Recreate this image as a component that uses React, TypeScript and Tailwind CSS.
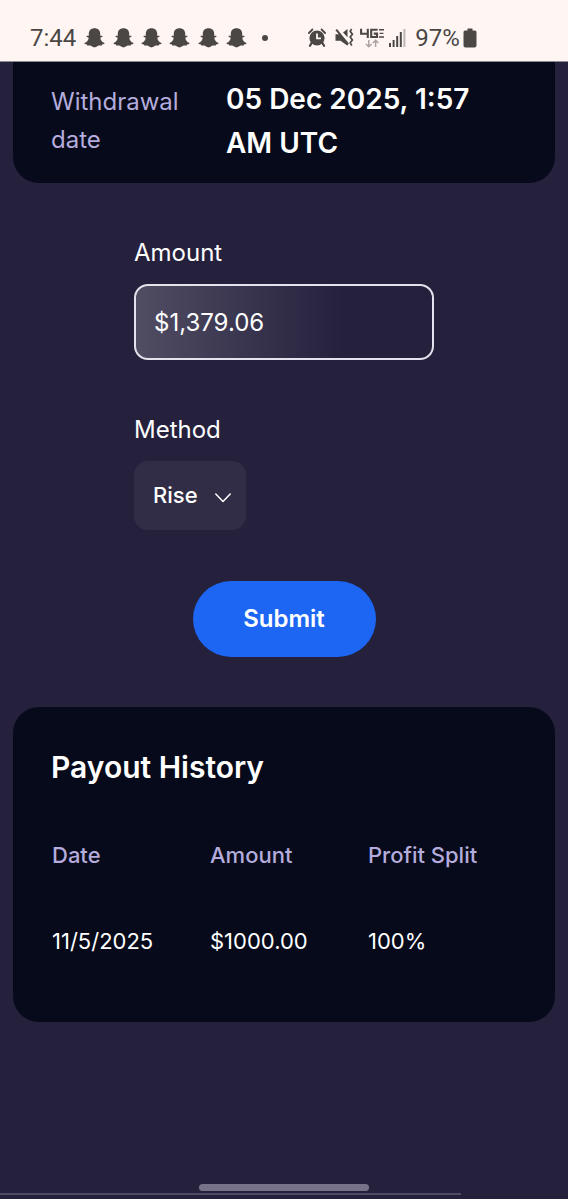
import React from 'react';

function Ghost() {
  return (
    <svg viewBox="0 0 21 20" className="h-5 w-[21px]" fill="#4b4745" aria-hidden="true">
      <path d="M10.5 0.2C7 0.2 4.8 2.4 4.8 5.6V7.8C4 8 3.2 7.7 2.6 7.9C2.2 8.5 3 9 4.7 9.8C4.5 12.3 2.8 14.2 0.5 15C0.1 15.5 0.7 16.3 3 16.6L3.5 17.7C6 17.3 7 17.7 8 18.6C9.5 19.7 11.5 19.7 13 18.6C14 17.7 15 17.3 17.5 17.7L18 16.6C20.3 16.3 20.9 15.5 20.5 15C18.2 14.2 16.5 12.3 16.3 9.8C18 9 18.8 8.5 18.4 7.9C17.8 7.7 17 8 16.2 7.8V5.6C16.2 2.4 14 0.2 10.5 0.2Z" />
    </svg>
  );
}

function Alarm() {
  return (
    <svg viewBox="0 0 18 19" className="h-[19px] w-[18px]" fill="none" aria-hidden="true">
      <path d="M3.5 15L2 17.8M14.5 15L16 17.8" stroke="#4b4745" strokeWidth="2.2" strokeLinecap="round" />
      <path d="M0.9 5L4.4 1.5M17.1 5L13.6 1.5" stroke="#4b4745" strokeWidth="1.8" strokeLinecap="round" />
      <circle cx="9" cy="10" r="7.6" fill="#4b4745" />
      <path d="M9 5.4V10.4H13" stroke="#fff6f4" strokeWidth="1.8" />
    </svg>
  );
}

function Muted() {
  return (
    <svg viewBox="0 0 19 19" className="h-[19px] w-[19px]" fill="none" aria-hidden="true">
      <path d="M0.5 6.2H4.5L7 8.5L12.5 14V17.8L5.5 12.8H0.5Z" fill="#4b4745" />
      <path d="M8 4.5L12.5 1V9.2Z" fill="#4b4745" />
      <path d="M1.2 1.6L13.2 16.4" stroke="#4b4745" strokeWidth="2" />
      <path d="M16.6 1L15.2 3.4L17.4 6.2L15.2 9L17.4 12L15.2 14.8L16.8 17.6" stroke="#4b4745" strokeWidth="1.7" />
    </svg>
  );
}

function Network() {
  return (
    <svg viewBox="0 0 24 20" className="h-5 w-6" fill="none" aria-hidden="true">
      <path d="M1.1 0.8V5.8H8.8M7.8 0.8V10M17.6 1.8H11.2V9H17V5.6H13.8" stroke="#4b4745" strokeWidth="2.1" />
      <path d="M19 1.8H24M19.6 5.4H23.4M19 9H24" stroke="#4b4745" strokeWidth="1.4" />
      <path d="M8.8 12V18.5M6 16L8.8 18.8L11.6 16M15.6 19V12.5M12.8 15L15.6 12.2L18.4 15" stroke="#aaa5a3" strokeWidth="1.5" />
    </svg>
  );
}

function Signal() {
  return (
    <svg viewBox="0 0 17 18" className="h-[18px] w-[17px]" fill="#4b4745" aria-hidden="true">
      <rect x="0" y="14" width="2" height="4" />
      <rect x="3.6" y="11" width="2" height="7" />
      <rect x="7.2" y="7" width="2" height="11" />
      <rect x="10.8" y="3" width="2" height="15" />
      <rect x="14.4" y="0" width="2" height="18" fill="#bdb7b5" />
    </svg>
  );
}

function Battery() {
  return (
    <svg viewBox="0 0 14 20" className="h-5 w-[14px]" fill="#4b4745" aria-hidden="true">
      <path d="M4.5 0.5H9.5V2.5H12A1.7 1.7 0 0 1 13.5 4.2V17.5A2 2 0 0 1 11.5 19.5H2.5A2 2 0 0 1 0.5 17.5V4.2A1.7 1.7 0 0 1 2 2.5H4.5Z" />
    </svg>
  );
}

function StatusBar() {
  return (
    <header className="flex h-[62px] items-center border-b border-[#8b8c93] bg-[#fff6f4] px-[30px] pt-[14px] font-[Roboto,sans-serif] text-2xl text-[#4b4745]">
      <span>7:44</span>
      <div className="ml-2 flex w-[163px] justify-between">
        {[0, 1, 2, 3, 4, 5].map((n) => (
          <Ghost key={n} />
        ))}
      </div>
      <span className="ml-[15px] size-[6px] rounded-full bg-[#4b4745]" />
      <div className="ml-10 flex items-center">
        <Alarm />
        <span className="ml-[9px]"><Muted /></span>
        <span className="ml-[6px]"><Network /></span>
        <span className="ml-[5px]"><Signal /></span>
        <span className="ml-[9px]">97%</span>
        <span className="ml-[3px]"><Battery /></span>
      </div>
    </header>
  );
}

const history = [{ date: '11/5/2025', amount: '$1000.00', split: '100%' }];

export default function App() {
  return (
    <div className="flex min-h-screen flex-col bg-[#25213d] font-[Inter,sans-serif] text-white">
      <StatusBar />
      <main className="flex grow flex-col px-[13px]">
        <dl className="flex gap-[39px] rounded-b-[26px] bg-[#070a1a] px-[38px] pt-[15px] pb-[18px]">
          <dt className="w-[136px] pt-[6px] text-2xl leading-[38px] text-[#b4acdc]">Withdrawal date</dt>
          <dd className="flex-1 text-[28px] leading-[44px] font-semibold">05 Dec 2025, 1:57 AM UTC</dd>
        </dl>

        <form className="mx-auto flex w-[300px] flex-col pt-[51px]" onSubmit={(e) => e.preventDefault()}>
          <label htmlFor="amount" className="text-2xl leading-[38px]">Amount</label>
          <input
            id="amount"
            type="text"
            defaultValue="$1,379.06"
            className="mt-3 h-[76px] w-full rounded-[14px] border-2 border-[#e4e2ec] bg-linear-to-r from-[#514d63] to-[#25213d] to-70% px-[18px] text-2xl outline-none"
          />
          <label htmlFor="method" className="mt-[51px] text-2xl leading-[38px]">Method</label>
          <div className="relative mt-3 w-[112px]">
            <select id="method" className="h-[69px] w-full appearance-none rounded-[14px] bg-[#312d47] pl-[19px] text-[22px] font-medium outline-none">
              <option>Rise</option>
            </select>
            <svg viewBox="0 0 16 10" className="pointer-events-none absolute top-[32px] right-[15px] h-[10px] w-4" fill="none" aria-hidden="true">
              <path d="M0.8 1L8 8.4L15.2 1" stroke="white" strokeWidth="1.5" strokeLinecap="round" strokeLinejoin="round" />
            </svg>
          </div>
          <button type="submit" className="mt-[51px] h-[76px] w-[183px] self-center rounded-full bg-[#1d66f4] text-2xl font-semibold">
            Submit
          </button>
        </form>

        <section className="mt-[50px] rounded-[26px] bg-[#070a1a] py-[38px] pr-[30px] pl-[38px]">
          <h2 className="text-[30px] leading-[44px] font-semibold">Payout History</h2>
          <table className="mt-[23px] w-full table-fixed text-left">
            <thead>
              <tr className="h-[86px] text-[22px] text-[#b4acdc]">
                <th className="pl-px font-medium">Date</th>
                <th className="pl-px font-medium">Amount</th>
                <th className="pl-px font-medium whitespace-nowrap">Profit Split</th>
              </tr>
            </thead>
            <tbody>
              {history.map((row) => (
                <tr key={row.date} className="h-[86px] text-[22px]">
                  <td className="pl-px">{row.date}</td>
                  <td className="pl-px">{row.amount}</td>
                  <td className="pl-px">{row.split}</td>
                </tr>
              ))}
            </tbody>
          </table>
        </section>
      </main>
      <footer className="flex flex-col items-center">
        <div className="h-[7px] w-[170px] rounded-full bg-[#77728a]" />
        <div className="mt-[2px] mb-1 h-[2px] w-[461px] self-start bg-[#4f4a66]" />
      </footer>
    </div>
  );
}
